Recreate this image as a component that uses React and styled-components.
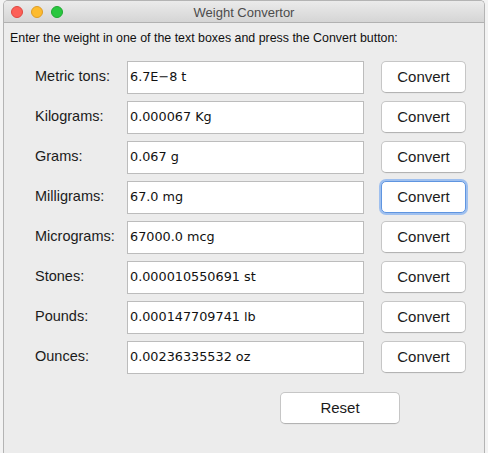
import React from "react";
import styled, { createGlobalStyle } from "styled-components";

const GlobalStyle = createGlobalStyle`
	html, body {
		margin: 0;
		padding: 0;
		background: #f3f3f3;
	}
	body {
		font-family: "Liberation Sans", Arial, sans-serif;
	}
`;

const Window = styled.div`
	box-sizing: border-box;
	margin-left: 3px;
	width: 482px;
	height: 453px;
	background: #ececec;
	border: 1px solid #b4b4b4;
	border-bottom: none;
	border-radius: 5px 5px 0 0;
	overflow: hidden;
	display: flex;
	flex-direction: column;
`;

const TitleBar = styled.div`
	box-sizing: border-box;
	height: 22px;
	flex: none;
	display: grid;
	grid-template-columns: 1fr auto 1fr;
	align-items: center;
	background: linear-gradient(#ebebeb, #d5d5d5);
	border-bottom: 1px solid #b1b1b1;
	padding: 0 7px;
`;

const Lights = styled.div`
	display: flex;
	gap: 8px;
	align-items: center;
`;

const Light = styled.span`
	box-sizing: border-box;
	width: 12px;
	height: 12px;
	border-radius: 50%;
	background: ${ p => p.$fill };
	border: 0.5px solid ${ p => p.$edge };
`;

const Title = styled.div`
	font-size: 13px;
	color: #4c4c4c;
	padding-top: 1px;
`;

const Body = styled.div`
	padding: 8px 0 0 6px;
	display: flex;
	flex-direction: column;
`;

const Hint = styled.div`
	font-size: 12.4px;
	line-height: 15px;
	color: #111;
`;

const Rows = styled.div`
	margin-top: 15px;
	margin-left: 25px;
	display: grid;
	grid-template-columns: 92px 237px 102px;
	row-gap: 7px;
	grid-auto-rows: 33px;
`;

const Label = styled.div`
	font-size: 14.5px;
	color: #1b1b1b;
	align-self: center;
	padding-bottom: 3px;
	white-space: nowrap;
`;

const Field = styled.input`
	box-sizing: border-box;
	width: 100%;
	height: 33px;
	margin: 0;
	padding: 0 0 2px 2px;
	border: 1px solid #bcbcbc;
	background: #fff;
	font-family: "DejaVu Sans", "Verdana", sans-serif;
	font-size: 12.8px;
	color: #111;
	outline: none;
`;

const Button = styled.button`
	box-sizing: border-box;
	justify-self: end;
	height: 32px;
	margin: 0;
	padding: 0 0 2px;
	background: #fff;
	border: 1px solid ${ p => ( p.$focused ? "#5f95e0" : "#c6c6c6" ) };
	border-bottom-color: ${ p => ( p.$focused ? "#5f95e0" : "#b3b3b3" ) };
	border-radius: 5px;
	box-shadow: ${ p => ( p.$focused ? "0 0 0 2px #9fc0ef" : "0 0.5px 0 rgba(0,0,0,0.05)" ) };
	font-family: "Liberation Sans", Arial, sans-serif;
	font-size: 15px;
	color: #1b1b1b;
	width: ${ p => p.$width || "85px" };
`;

const Footer = styled.div`
	margin-top: 18px;
	padding-left: 270px;
	display: flex;
`;

const units = [
	[ "Metric tons:", "6.7E\u22128 t" ],
	[ "Kilograms:", "0.000067 Kg" ],
	[ "Grams:", "0.067 g" ],
	[ "Milligrams:", "67.0 mg" ],
	[ "Micrograms:", "67000.0 mcg" ],
	[ "Stones:", "0.000010550691 st" ],
	[ "Pounds:", "0.000147709741 lb" ],
	[ "Ounces:", "0.00236335532 oz" ],
];

const App = () => {
	return (
		<>
			<GlobalStyle />
			<Window>
				<TitleBar>
					<Lights>
						<Light $fill="#fc5f57" $edge="#df4740" />
						<Light $fill="#fdbb2e" $edge="#de9d25" />
						<Light $fill="#29c73f" $edge="#1fa832" />
					</Lights>
					<Title>Weight Convertor</Title>
					<span />
				</TitleBar>
				<Body>
					<Hint>Enter the weight in one of the text boxes and press the Convert button:</Hint>
					<Rows>
						{ units.map( ( [ label, value ], i ) => (
							<React.Fragment key={ label }>
								<Label>{ label }</Label>
								<Field defaultValue={ value } />
								<Button $focused={ i === 3 }>Convert</Button>
							</React.Fragment>
						) ) }
					</Rows>
					<Footer>
						<Button $width="120px">Reset</Button>
					</Footer>
				</Body>
			</Window>
		</>
	);
};

export default App;
